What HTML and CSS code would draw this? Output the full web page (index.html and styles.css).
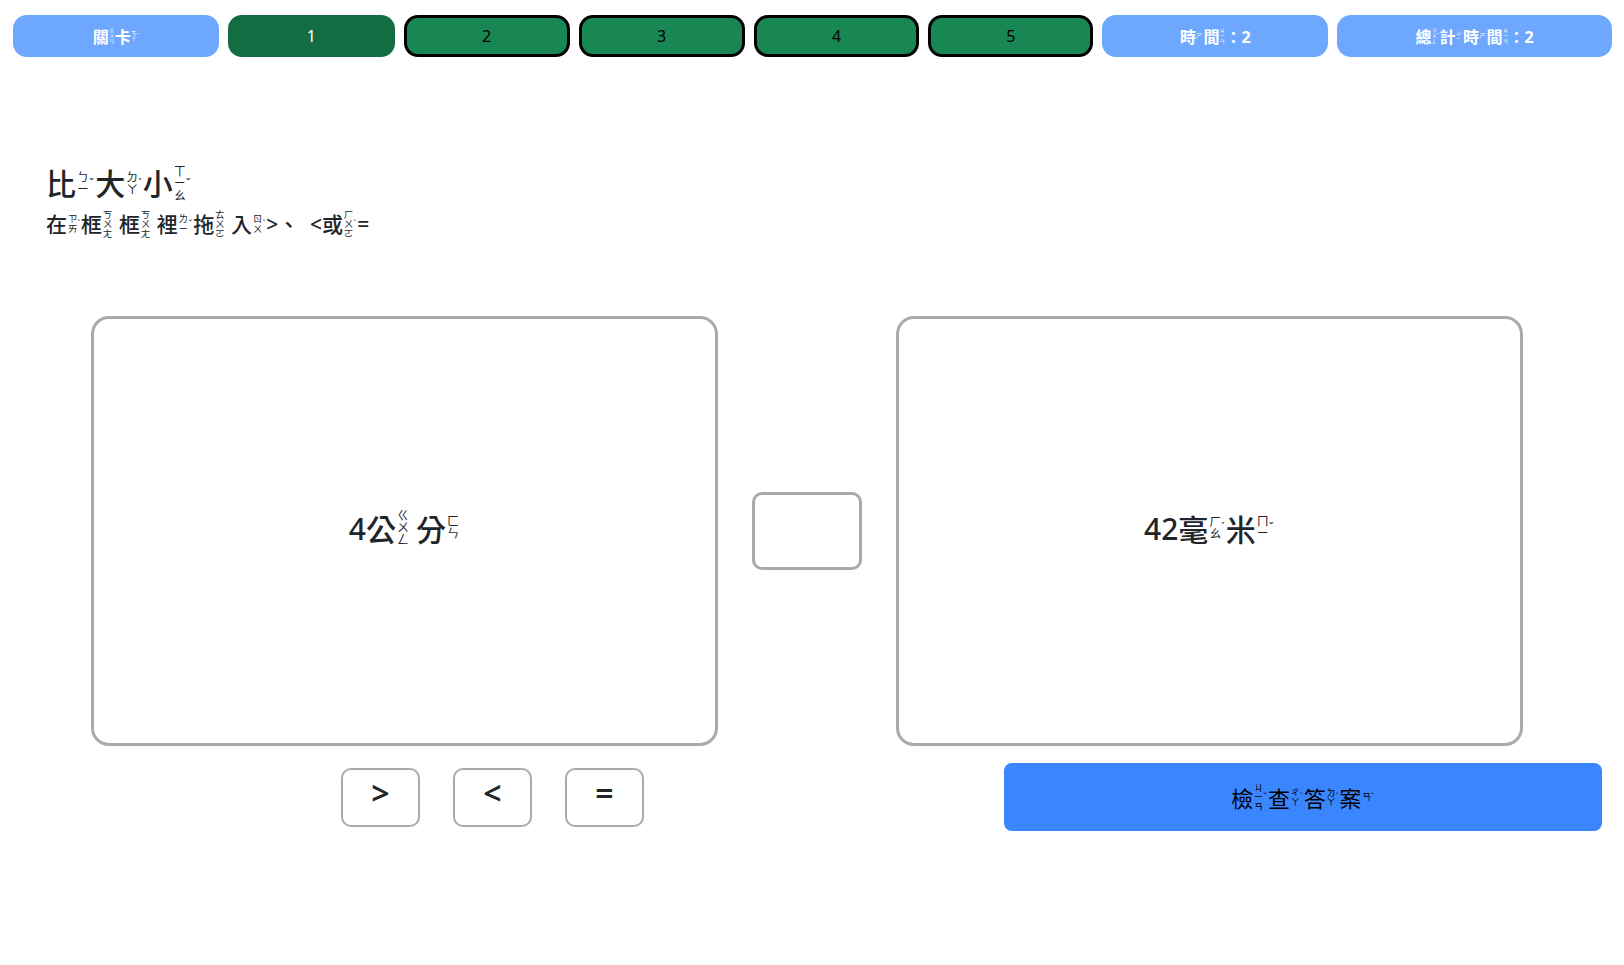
FILE: index.html
```html
<!DOCTYPE html>
<html lang="zh-Hant">
<head>
<meta charset="utf-8">
<title>比大小</title>
<link rel="stylesheet" href="styles.css">
</head>
<body>
<div class="topbar">
  <div class="pill info"><span class="r">關<span class="b"><span class="s"><i>ㄍ</i><i>ㄨ</i><i>ㄢ</i></span></span></span><span class="r">卡<span class="b"><span class="s"><i>ㄎ</i><i>ㄚ</i></span><span class="t">ˇ</span></span></span></div>
  <div class="pill level active">1</div>
  <div class="pill level">2</div>
  <div class="pill level">3</div>
  <div class="pill level">4</div>
  <div class="pill level">5</div>
  <div class="pill info"><span class="r">時<span class="b"><span class="s"><i>ㄕ</i></span><span class="t">ˊ</span></span></span><span class="r">間<span class="b"><span class="s"><i>ㄐ</i><i>ㄧ</i><i>ㄢ</i></span></span></span>：2</div>
  <div class="pill info"><span class="r">總<span class="b"><span class="s"><i>ㄗ</i><i>ㄨ</i><i>ㄥ</i></span><span class="t">ˇ</span></span></span><span class="r">計<span class="b"><span class="s"><i>ㄐ</i><i>ㄧ</i></span><span class="t">ˋ</span></span></span><span class="r">時<span class="b"><span class="s"><i>ㄕ</i></span><span class="t">ˊ</span></span></span><span class="r">間<span class="b"><span class="s"><i>ㄐ</i><i>ㄧ</i><i>ㄢ</i></span></span></span>：2</div>
</div>

<main class="game">
  <h1 class="title"><span class="r">比<span class="b"><span class="s"><i>ㄅ</i><i>ㄧ</i></span><span class="t">ˇ</span></span></span><span class="r">大<span class="b"><span class="s"><i>ㄉ</i><i>ㄚ</i></span><span class="t">ˋ</span></span></span><span class="r">小<span class="b"><span class="s"><i>ㄒ</i><i>ㄧ</i><i>ㄠ</i></span><span class="t">ˇ</span></span></span></h1>
  <p class="hint"><span class="r">在<span class="b"><span class="s"><i>ㄗ</i><i>ㄞ</i></span><span class="t">ˋ</span></span></span><span class="r">框<span class="b"><span class="s"><i>ㄎ</i><i>ㄨ</i><i>ㄤ</i></span></span></span> <span class="r">框<span class="b"><span class="s"><i>ㄎ</i><i>ㄨ</i><i>ㄤ</i></span></span></span> <span class="r">裡<span class="b"><span class="s"><i>ㄌ</i><i>ㄧ</i></span><span class="t">ˇ</span></span></span><span class="r">拖<span class="b"><span class="s"><i>ㄊ</i><i>ㄨ</i><i>ㄛ</i></span></span></span> <span class="r">入<span class="b"><span class="s"><i>ㄖ</i><i>ㄨ</i></span><span class="t">ˋ</span></span></span>&gt;、 &nbsp;&lt;<span class="r">或<span class="b"><span class="s"><i>ㄏ</i><i>ㄨ</i><i>ㄛ</i></span><span class="t">ˋ</span></span></span>=</p>

  <div class="board">
    <div class="card"><span class="num">4</span><span class="r">公<span class="b"><span class="s"><i>ㄍ</i><i>ㄨ</i><i>ㄥ</i></span></span></span><span class="gap"></span><span class="r">分<span class="b"><span class="s"><i>ㄈ</i><i>ㄣ</i></span></span></span></div>
    <div class="slot"></div>
    <div class="card"><span class="num">42</span><span class="r">毫<span class="b"><span class="s"><i>ㄏ</i><i>ㄠ</i></span><span class="t">ˊ</span></span></span><span class="r">米<span class="b"><span class="s"><i>ㄇ</i><i>ㄧ</i></span><span class="t">ˇ</span></span></span></div>
  </div>

  <div class="controls">
    <div class="ops">
      <button class="op">&gt;</button>
      <button class="op">&lt;</button>
      <button class="op">=</button>
    </div>
    <button class="check"><span class="r">檢<span class="b"><span class="s"><i>ㄐ</i><i>ㄧ</i><i>ㄢ</i></span><span class="t">ˇ</span></span></span><span class="r">查<span class="b"><span class="s"><i>ㄔ</i><i>ㄚ</i></span><span class="t">ˊ</span></span></span><span class="r">答<span class="b"><span class="s"><i>ㄉ</i><i>ㄚ</i></span><span class="t">ˊ</span></span></span><span class="r">案<span class="b"><span class="s"><i>ㄢ</i></span><span class="t">ˋ</span></span></span></button>
  </div>
</main>
</body>
</html>
```

FILE: styles.css
```css
* { box-sizing: border-box; }

html, body {
  margin: 0;
  padding: 0;
  background: #ffffff;
  color: #212529;
  font-family: "Noto Sans", "Noto Sans CJK TC", sans-serif;
}

/* zhuyin annotated character */
.r {
  display: inline-flex;
  align-items: center;
  white-space: nowrap;
}
.b {
  display: inline-flex;
  align-items: center;
  font-size: 0.32em;
  line-height: 1;
  font-weight: 400;
  margin-left: 0.08em;
  margin-right: 0.1em;
}
.b .s {
  display: flex;
  flex-direction: column;
  align-items: center;
}
.b i {
  font-style: normal;
  display: block;
}
.b .t {
  font-size: 1em;
}

/* top bar */
.topbar {
  display: grid;
  grid-template-columns: 206fr 167fr 166fr 166fr 166fr 165fr 226fr 275fr;
  gap: 9px;
  padding: 15px 12px 0 13px;
}
.pill {
  height: 42px;
  border-radius: 14px;
  display: flex;
  align-items: center;
  justify-content: center;
  font-size: 16px;
}
.pill.info {
  background: #6ea8fe;
  color: #ffffff;
  font-weight: 700;
}
.pill.level {
  background: #198754;
  color: #000000;
  border: 3px solid #000000;
}
.pill.level.active {
  background: #146c43;
  color: #ffffff;
  border: none;
}

/* game */
.game {
  padding: 0 0 0 46px;
}
.title {
  margin: 107px 0 0 0;
  font-size: 30px;
  line-height: 40px;
  font-weight: 500;
  color: #212529;
}
.title .b { font-size: 0.4em; }
.hint {
  margin: 4px 0 0 0;
  font-size: 21px;
  line-height: 32px;
  font-weight: 500;
  color: #212529;
}
.hint .b { font-size: 0.46em; }

.board {
  display: flex;
  align-items: center;
  gap: 34px;
  margin: 76px 0 0 45px;
}
.card {
  width: 627px;
  height: 430px;
  border: 3px solid #aaaaaa;
  border-radius: 18px;
  display: flex;
  align-items: center;
  justify-content: center;
  font-size: 30px;
  font-weight: 500;
  color: #212529;
  padding-bottom: 6px;
}
.card .b { font-size: 0.4em; }
.card .gap { display: inline-block; width: 6px; }
.slot {
  width: 110px;
  height: 78px;
  border: 3px solid #aaaaaa;
  border-radius: 10px;
}

.controls {
  display: flex;
  align-items: center;
  margin-top: 17px;
}
.ops {
  display: flex;
  gap: 33px;
  margin-left: 295px;
  padding-top: 1px;
}
.op {
  width: 79px;
  height: 59px;
  border: 2px solid #aaaaaa;
  border-radius: 10px;
  background: #ffffff;
  color: #212529;
  font-family: "Noto Sans", sans-serif;
  font-size: 32px;
  font-weight: 600;
  line-height: 1;
  padding: 0 0 10px 0;
  display: flex;
  align-items: center;
  justify-content: center;
}
.check {
  margin-left: 360px;
  width: 598px;
  height: 68px;
  border: none;
  border-radius: 8px;
  background: #3a86ff;
  color: #000000;
  font-family: "Noto Sans", "Noto Sans CJK TC", sans-serif;
  font-size: 22px;
  display: flex;
  align-items: center;
  justify-content: center;
  padding: 0;
}
.check .b { font-size: 0.42em; }
```
